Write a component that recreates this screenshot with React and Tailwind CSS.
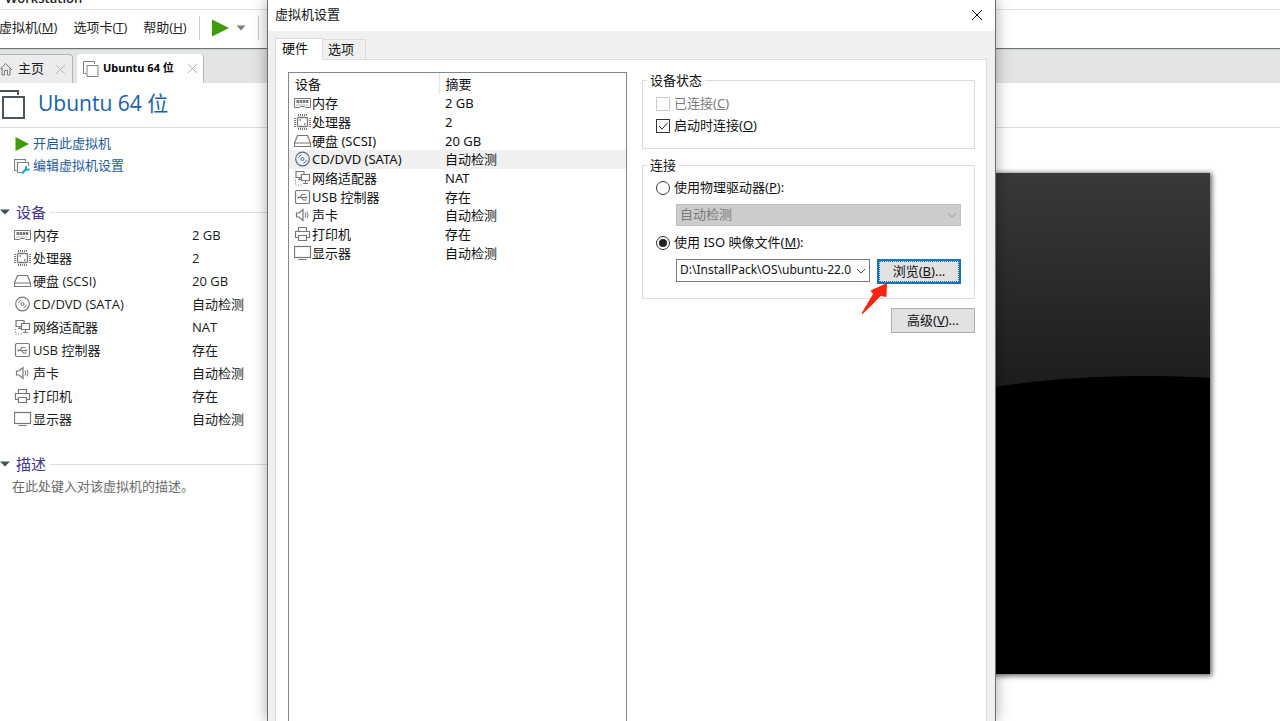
import { useState } from "react";

const devices = [
  { icon: "memory", name: "内存", summary: "2 GB" },
  { icon: "cpu", name: "处理器", summary: "2" },
  { icon: "disk", name: "硬盘 (SCSI)", summary: "20 GB" },
  { icon: "cd", name: "CD/DVD (SATA)", summary: "自动检测" },
  { icon: "network", name: "网络适配器", summary: "NAT" },
  { icon: "usb", name: "USB 控制器", summary: "存在" },
  { icon: "sound", name: "声卡", summary: "自动检测" },
  { icon: "printer", name: "打印机", summary: "存在" },
  { icon: "display", name: "显示器", summary: "自动检测" },
];

const iconShapes = {
  memory: (
    <>
      <path d="M0.5 3.5h16v9h-5l-1-1h-4l-1 1h-5z" />
      <path d="M2.5 6.5h12" strokeWidth="3" strokeDasharray="2.5 0.6" />
      <path d="M2.5 10h12" strokeDasharray="1 1" />
    </>
  ),
  cpu: (
    <>
      <rect x="3.5" y="3.5" width="10" height="9" rx="1" strokeWidth="1.3" />
      <path d="M4 1h9M4 15h9" strokeWidth="2" strokeDasharray="1 1" />
      <path d="M1 4v9M16 4v9" strokeWidth="2" strokeDasharray="1 1" />
      <path d="M5.5 6h1.5M10 10h1.500" strokeWidth="1.500" />
    </>
  ),
  disk: (
    <>
      <path d="M0.5 10L3.5 2.500h10L16.500 10v3.500H0.500z" strokeWidth="1.200" />
      <path d="M0.500 10h16" />
    </>
  ),
  cd: (
    <>
      <circle cx="8.500" cy="8" r="6.800" strokeWidth="1.200" />
      <circle cx="8.500" cy="8" r="1.500" />
      <path d="M4.500 7a4.500 4.500 0 0 1 3-3M12.500 9a4.500 4.500 0 0 1-3 3" />
    </>
  ),
  network: (
    <>
      <path d="M2 1.500h8v6H2zM5.500 7.500v2M4 9.500h3.500" strokeWidth="1.200" />
      <path d="M7.500 4.500h8v6h-8z" fill="white" strokeWidth="1.200" />
      <path d="M11.500 10.500v2.500M9 13.500h5" strokeWidth="1.200" />
      <path d="M1.500 10v5h7" strokeDasharray="1 1.500" />
    </>
  ),
  usb: (
    <>
      <rect x="1.500" y="1.500" width="14" height="13" rx="1.500" strokeWidth="1.200" />
      <path d="M4 8.500h9M6 8.500l2-3h2M7.500 8.500l2 2.500h2" strokeWidth="1.200" />
      <path d="M11.500 7v3l2-1.500zM3.500 7.500h1.500v2h-1.500zM10 5h1.500v1h-1.500zM11 10.500h1.500v1h-1.500z" fill="currentColor" stroke="none" />
    </>
  ),
  sound: (
    <>
      <path d="M2.500 6h2.500L9 2.500v11L5 10H2.500z" strokeWidth="1.200" />
      <path d="M11 5.500q1.500 2.500 0 5M13 4.500q2 3.500 0 7" />
    </>
  ),
  printer: (
    <>
      <path d="M4.500 5.500v-4h8v4M4.500 11.500H1.500v-6h14v6H12.500" strokeWidth="1.200" />
      <path d="M4.500 9.500h8v5h-8z" strokeWidth="1.200" />
    </>
  ),
  display: (
    <>
      <rect x="0.500" y="1.500" width="16" height="11" strokeWidth="1.200" />
      <path d="M4.500 14.500h8" />
    </>
  ),
};

function DeviceIcon({ type, className }) {
  return (
    <svg
      viewBox="0 0 18 16"
      className={`w-[18px] h-4 shrink-0 ${className}`}
      fill="none"
      stroke="currentColor"
      aria-hidden="true"
    >
      {iconShapes[type]}
    </svg>
  );
}

function Key({ text, letter, after = "" }) {
  return (
    <span className="whitespace-nowrap">
      {text}(<span className="underline underline-offset-1">{letter}</span>){after}
    </span>
  );
}

function CloseIcon({ className }) {
  return (
    <svg viewBox="0 0 12 12" className={className} stroke="currentColor" fill="none" aria-hidden="true">
      <path d="M1 1l10 10M11 1L1 11" />
    </svg>
  );
}

function Chevron({ className }) {
  return (
    <svg viewBox="0 0 10 6" className={className} stroke="currentColor" fill="none" aria-hidden="true">
      <path d="M1 1l4 4 4-4" />
    </svg>
  );
}

function MenuBar() {
  return (
    <nav className="flex items-center gap-4 h-[38px] -ml-px pb-[2px] text-[13px] text-[#222]">
      <button><Key text="虚拟机" letter="M" /></button>
      <button><Key text="选项卡" letter="T" /></button>
      <button><Key text="帮助" letter="H" /></button>
      <div className="flex items-center h-6 -ml-1 px-3 border-x border-[#ccc]">
        <button aria-label="启动">
          <svg viewBox="0 0 17 18" className="w-[17px] h-[18px]" fill="#3f9c0a">
            <path d="M0 0.500L17 9L0 17.500z" />
          </svg>
        </button>
        <button className="ml-[7px]" aria-label="电源选项">
          <svg viewBox="0 0 10 6" className="w-[10px] h-[6px]" fill="#7d7d7d">
            <path d="M0.500 0.500h9L5 5.500z" />
          </svg>
        </button>
      </div>
    </nav>
  );
}

function WindowTabs() {
  return (
    <div className="flex items-end h-[34px] bg-[#e3e4e6] border-t border-[#d2d3d5] text-[13px]">
      <div className="flex items-center w-[73px] h-[29px] mr-1 border-t border-r border-[#b5b5b5] rounded-tr bg-[#ebecee] text-[#222]">
        <svg viewBox="0 0 13 14" className="w-[13px] h-[14px] shrink-0" fill="none" stroke="#777" aria-hidden="true">
          <path d="M0 7.500L5.500 1.500L12 8M2 6v7h2.500V8.500h3V13H10V6" />
        </svg>
        <button className="ml-[5px] whitespace-nowrap">主页</button>
        <button className="ml-auto mr-[6px] text-[#b0b0b0]" aria-label="关闭主页">
          <CloseIcon className="w-[11px] h-[11px]" />
        </button>
      </div>
      <div className="flex items-center w-[127px] h-[29px] border-r border-[#b5b5b5] rounded-t bg-white text-black">
        <svg viewBox="0 0 16 16" className="w-4 h-4 ml-[6px] shrink-0" fill="none" stroke="#808080" aria-hidden="true">
          <path d="M3 12.500H0.500V0.500h11V3" />
          <path d="M4 4.500h11v11H4z" />
        </svg>
        <button className="ml-1 font-['Noto_Sans','Noto_Sans_CJK_SC',sans-serif] text-[11px] font-bold whitespace-nowrap">
          Ubuntu 64 位
        </button>
        <button className="ml-auto mr-[5px] text-[#b0b0b0]" aria-label="关闭 Ubuntu 64 位">
          <CloseIcon className="w-[11px] h-[11px]" />
        </button>
      </div>
    </div>
  );
}

function SectionTitle({ children }) {
  return (
    <h2 className="flex items-center h-6 text-[15px] text-[#45388a]">
      <svg viewBox="0 0 10 6" className="w-[10px] h-[6px] mr-[6px]" fill="#3f5258" aria-hidden="true">
        <path d="M0 0.500h10L5 5.500z" />
      </svg>
      {children}
      <span className="flex-1 h-px ml-1 bg-[#dedede]" />
    </h2>
  );
}

function Sidebar() {
  return (
    <aside className="w-[270px] shrink-0 pt-[5px] text-[13px] text-[#1a1a1a]">
      <a href="#start" className="flex items-center h-[22px] pl-[15px] text-[#245c9c]">
        <svg viewBox="0 0 14 14" className="w-[14px] h-[14px] mr-1" fill="#3f9c0a" aria-hidden="true">
          <path d="M0.500 0L14 7L0.500 14z" />
        </svg>
        开启此虚拟机
      </a>
      <a href="#edit" className="flex items-center h-[22px] pl-[14px] text-[#245c9c]">
        <svg viewBox="0 0 16 16" className="w-4 h-4 mr-[3px]" fill="none" stroke="#808080" aria-hidden="true">
          <path d="M2.500 12.500H0.500V1.500h11v2M8 14.500H3.500V4.500h11V8" strokeWidth="1.200" />
          <path d="M8 15.500l4-4.500" stroke="#1ba5c4" strokeWidth="2.200" />
          <path d="M12 8v3.500h3.500" stroke="#1ba5c4" strokeWidth="1.800" />
        </svg>
        编辑虚拟机设置
      </a>

      <div className="mt-[23px]">
        <SectionTitle>设备</SectionTitle>
        <table className="w-full h-[206px] table-fixed leading-[18px]">
          <tbody>
            {devices.map((device) => (
              <tr key={device.icon}>
                <td className="w-[192px] p-0 pl-[14px]">
                  <span className="flex items-center gap-px">
                    <DeviceIcon type={device.icon} className="text-[#777]" />
                    {device.name}
                  </span>
                </td>
                <td className="p-0">{device.summary}</td>
              </tr>
            ))}
          </tbody>
        </table>
      </div>

      <div className="mt-[22px]">
        <SectionTitle>描述</SectionTitle>
        <p className="pl-3 text-[#6a6a6a] leading-5">在此处键入对该虚拟机的描述。</p>
      </div>
    </aside>
  );
}

function ScreenPreview() {
  return (
    <div className="flex flex-1 items-start justify-end pt-[45px] pr-[70px]">
      <svg viewBox="0 0 668 501" className="w-[668px] shrink-0 shadow-[1px_1px_5px_1px_rgba(0,0,0,0.6)]" role="img" aria-label="虚拟机屏幕">
        <defs>
          <linearGradient id="glass" x1="0" y1="0" x2="0" y2="1">
            <stop offset="0" stopColor="#393939" />
            <stop offset="0.420" stopColor="#1d1d1d" />
          </linearGradient>
        </defs>
        <rect width="668" height="501" fill="url(#glass)" />
        <circle cx="603" cy="1260" r="1057" fill="black" />
      </svg>
    </div>
  );
}

function DeviceTable({ selected, onSelect }) {
  return (
    <div className="flex-1 border border-b-0 border-[#828790] bg-white">
      <table className="w-full h-[189px] table-fixed leading-[18px]">
        <thead>
          <tr className="h-[21px] text-left">
            <th className="w-[150px] p-0 pl-[6px] font-normal border-r border-[#e5e5e5]">设备</th>
            <th className="p-0 pl-[6px] font-normal">摘要</th>
          </tr>
        </thead>
        <tbody>
          {devices.map((device) => (
            <tr
              key={device.icon}
              className={selected === device.icon ? "bg-[#f0f0f0]" : ""}
              onClick={() => onSelect(device.icon)}
            >
              <td className="p-0 pl-[5px]">
                <span className="flex items-center">
                  <DeviceIcon
                    type={device.icon}
                    className={selected === device.icon ? "text-[#55708c]" : "text-[#777]"}
                  />
                  {device.name}
                </span>
              </td>
              <td className="p-0 pl-[6px]">{device.summary}</td>
            </tr>
          ))}
        </tbody>
      </table>
    </div>
  );
}

function CheckRow({ label, ...props }) {
  return (
    <label className={`flex items-center gap-1 h-[22px] ${props.disabled ? "text-[#7a7a7a]" : ""}`}>
      <span className="relative flex">
        <input
          type="checkbox"
          className="appearance-none w-[14px] h-[14px] border border-[#333] bg-white disabled:border-[#ccc]"
          {...props}
        />
        {props.checked && (
          <svg viewBox="0 0 14 14" className="absolute inset-0 pointer-events-none" fill="none" stroke="#222" aria-hidden="true">
            <path d="M3 7l3 3 5.500-6" />
          </svg>
        )}
      </span>
      {label}
    </label>
  );
}

function RadioRow({ label, ...props }) {
  return (
    <label className="flex items-center gap-1 h-[22px]">
      <span className="relative flex">
        <input
          type="radio"
          name="source"
          className="appearance-none w-[14px] h-[14px] border border-[#333] rounded-full bg-white"
          {...props}
        />
        {props.checked && (
          <span className="absolute inset-[3px] rounded-full bg-[#222] pointer-events-none" />
        )}
      </span>
      {label}
    </label>
  );
}

function CdSettings() {
  const [connectAtStart, setConnectAtStart] = useState(true);
  const [source, setSource] = useState("iso");

  return (
    <div className="w-[333px] shrink-0 -mt-px">
      <fieldset className="px-[13px] pb-[11px] border border-[#dcdcdc]">
        <legend className="-ml-[9px] px-[3px] leading-[18px]">设备状态</legend>
        <div className="pt-1">
          <CheckRow label={<Key text="已连接" letter="C" />} disabled />
          <CheckRow
            label={<Key text="启动时连接" letter="O" />}
            checked={connectAtStart}
            onChange={() => setConnectAtStart(!connectAtStart)}
          />
        </div>
      </fieldset>

      <fieldset className="mt-[7px] px-[13px] pb-[14px] border border-[#dcdcdc]">
        <legend className="-ml-[9px] px-[3px] leading-[18px]">连接</legend>
        <div className="pt-[3px]">
          <RadioRow
            label={<Key text="使用物理驱动器" letter="P" after=":" />}
            checked={source === "drive"}
            onChange={() => setSource("drive")}
          />
          <div className="relative mt-[5px] ml-5">
            <select
              disabled
              aria-label="物理驱动器"
              className="block appearance-none w-full h-[22px] px-[3px] border border-[#bfbfbf] bg-[#ccc] text-[#7a7a7a] opacity-100"
            >
              <option>自动检测</option>
            </select>
            <Chevron className="absolute right-1 top-2 w-[10px] h-[6px] text-[#a0a0a0] pointer-events-none" />
          </div>
        </div>
        <div className="mt-[6px]">
          <RadioRow
            label={<Key text="使用 ISO 映像文件" letter="M" after=":" />}
            checked={source === "iso"}
            onChange={() => setSource("iso")}
          />
        </div>
        <div className="flex items-start gap-[7px] mt-[5px] ml-5">
          <div className="relative flex-1">
            <select
              aria-label="ISO 映像文件"
              className="block appearance-none w-full h-[23px] px-[3px] pb-[2px] border border-[#7a7a7a] bg-white text-[12px]"
            >
              <option>D:\InstallPack\OS\ubuntu-22.0</option>
            </select>
            <Chevron className="absolute right-1 top-[9px] w-[10px] h-[6px] text-[#444] pointer-events-none" />
          </div>
          <div className="relative">
            <button className="block w-[84px] h-[25px] border-2 border-[#1873b8] bg-[#e1e1e1] outline-1 outline-dotted -outline-offset-3 outline-[#1873b8]">
              <Key text="浏览" letter="B" after="..." />
            </button>
            <svg viewBox="0 0 28 32" className="absolute -left-4 top-6 w-7 h-8 pointer-events-none" fill="#fb2412" aria-hidden="true">
              <path d="M0.500 30.500L12 11L9.500 7.500L26 0L25.500 14L19.500 13Q11 22.500 1.500 31z" />
            </svg>
          </div>
        </div>
      </fieldset>

      <button className="block w-[84px] h-[25px] mt-[9px] ml-auto border border-[#adadad] bg-[#e1e1e1]">
        <Key text="高级" letter="V" after="..." />
      </button>
    </div>
  );
}

function SettingsDialog() {
  const [selected, setSelected] = useState("cd");

  return (
    <div
      role="dialog"
      aria-label="虚拟机设置"
      className="absolute inset-y-0 left-[267px] right-[284px] flex flex-col border-x border-[#707070] bg-[#f0f0f0] shadow-[0_0_14px_rgba(0,0,0,0.35)] font-['Noto_Sans','Noto_Sans_CJK_SC',sans-serif] text-[13px] text-[#111]"
    >
      <div className="flex items-center justify-between h-[31px] shrink-0 pl-[7px] pr-3 pb-[2px] bg-white">
        <h1>虚拟机设置</h1>
        <button aria-label="关闭">
          <CloseIcon className="w-[12px] h-[12px]" />
        </button>
      </div>

      <div role="tablist" className="flex items-end h-[28px] shrink-0 pl-[7px]">
        <button role="tab" aria-selected="true" className="relative z-10 w-[48px] h-[22px] -mb-px pb-[2px] border border-b-0 border-[#dcdcdc] bg-white pr-2">
          硬件
        </button>
        <button role="tab" aria-selected="false" className="w-[43px] h-5 border border-l-0 border-b-0 border-[#dcdcdc] bg-[#f0f0f0] pr-[6px]">
          选项
        </button>
      </div>

      <div className="flex flex-1 gap-[15px] ml-[7px] mr-2 pt-3 pl-3 pr-[11px] border-x border-t border-[#dcdcdc] bg-white">
        <DeviceTable selected={selected} onSelect={setSelected} />
        <CdSettings />
      </div>
    </div>
  );
}

export default function App() {
  return (
    <div className="relative flex flex-col min-h-screen overflow-hidden bg-white font-['Open_Sans','Noto_Sans_CJK_SC',sans-serif]">
      <header>
        <div className="flex items-end h-[10px] pl-[5px] pb-[2px] border-b border-[#e2e2e2] text-[13px] leading-[18px] font-semibold text-[#222] overflow-hidden">
          Workstation
        </div>
        <MenuBar />
      </header>
      <div className="border-t border-[#6c7572]">
        <WindowTabs />
      </div>
      <div className="flex items-center h-[45px] pb-1 border-b border-[#dedede]">
        <svg viewBox="0 0 26 34" className="w-[26px] h-[34px] mr-3" fill="none" stroke="#4a545a" strokeWidth="2" aria-hidden="true">
          <path d="M0 5h18v4" />
          <path d="M3 11h21v21H3z" />
        </svg>
        <h1 className="text-[21px] text-[#1562b0] leading-8">Ubuntu 64 位</h1>
      </div>
      <main className="flex flex-1">
        <Sidebar />
        <ScreenPreview />
      </main>
      <SettingsDialog />
    </div>
  );
}
